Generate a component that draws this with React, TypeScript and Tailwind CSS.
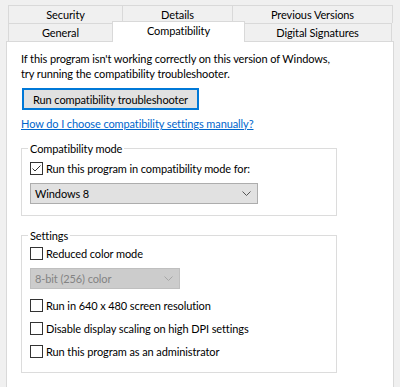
import React from 'react'

const font = { fontFamily: 'Lato, "Liberation Sans", Arial, sans-serif' }

function Tab({ label, width, selected }: { label: string; width: number; selected?: boolean }) {
  return (
    <div
      style={{ width }}
      className={
        selected
          ? 'relative z-10 -mx-[1px] -mt-[2px] flex h-[21px] items-start justify-center border border-b-0 border-[#d9d9d9] bg-white pt-[1px] text-black'
          : 'flex h-[18px] items-center justify-center border border-b-0 border-[#d9d9d9] bg-[#f0f0f0] text-black [&+&]:border-l-0'
      }
    >
      {label}
    </div>
  )
}

function Checkbox({ checked, label }: { checked?: boolean; label: string }) {
  return (
    <div className="flex h-[15px] items-center">
      <div className="flex h-[13px] w-[13px] items-center justify-center border border-[#333333] bg-white">
        {checked && (
          <svg width="11" height="11" viewBox="0 0 11 11">
            <path d="M1.5 5.5 L4 8 L9.5 2.5" fill="none" stroke="#333333" strokeWidth="1" />
          </svg>
        )}
      </div>
      <span className="ml-[3px] text-black">{label}</span>
    </div>
  )
}

function Select({ value, width, disabled }: { value: string; width: number; disabled?: boolean }) {
  return (
    <div
      style={{ width }}
      className={`flex h-[21px] items-center justify-between border pl-[4px] pr-[6px] ${
        disabled ? 'border-[#bfbfbf] bg-[#cccccc] text-[#838383]' : 'border-[#adadad] bg-[#e1e1e1] text-black'
      }`}
    >
      <span>{value}</span>
      <svg width="9" height="5" viewBox="0 0 9 5">
        <path d="M0.5 0.5 L4.5 4.5 L8.5 0.5" fill="none" stroke={disabled ? '#a6a6a6' : '#555555'} strokeWidth="1" />
      </svg>
    </div>
  )
}

function GroupBox({ title, children, className }: { title: string; children: React.ReactNode; className?: string }) {
  return (
    <div className={`relative w-[316px] border border-[#dcdcdc] pl-[8px] ${className ?? ''}`}>
      <span className="absolute -top-[8px] left-[6px] bg-white px-[2px] text-black">{title}</span>
      {children}
    </div>
  )
}

export default function App() {
  return (
    <div
      style={font}
      className="h-[387px] w-[400px] overflow-hidden bg-[#f0f0f0] pt-[5px] text-[11px] leading-[15px] tracking-[-0.1px]"
    >
      {/* Tabs */}
      <div className="ml-[8px] flex">
        <Tab label="Security" width={115} />
        <Tab label="Details" width={110} />
        <Tab label="Previous Versions" width={160} />
      </div>
      <div className="ml-[8px] flex h-[18px]">
        <Tab label="General" width={105} />
        <Tab label="Compatibility" width={133} selected />
        <div
          style={{ width: 148 }}
          className="flex h-[18px] items-center justify-center border border-b-0 border-l-0 border-[#d9d9d9] bg-[#f0f0f0] text-black"
        >
          Digital Signatures
        </div>
      </div>

      {/* Panel */}
      <div className="ml-[6px] h-[360px] w-[388px] border border-[#d9d9d9] bg-white pl-[14px] pt-[9px]">
        <p className="text-black">
          If this program isn't working correctly on this version of Windows,
          <br />
          try running the compatibility troubleshooter.
        </p>
        <button className="ml-[1px] mt-[7px] flex h-[22px] w-[177px] items-center justify-center border-2 border-[#0078d7] bg-[#e1e1e1] text-black">
          Run compatibility troubleshooter
        </button>
        <a className="mt-[6px] block w-fit text-[#0066cc] underline">
          How do I choose compatibility settings manually?
        </a>

        <GroupBox title="Compatibility mode" className="mt-[17px] pb-[11px] pt-[12px]">
          <Checkbox checked label="Run this program in compatibility mode for:" />
          <div className="mt-[7px]">
            <Select value="Windows 8" width={228} />
          </div>
        </GroupBox>

        <GroupBox title="Settings" className="mt-[19px] pb-[13px] pt-[10px]">
          <Checkbox label="Reduced color mode" />
          <div className="mt-[7px]">
            <Select value="8-bit (256) color" width={150} disabled />
          </div>
          <div className="mt-[9px]">
            <Checkbox label="Run in 640 x 480 screen resolution" />
          </div>
          <div className="mt-[8px]">
            <Checkbox label="Disable display scaling on high DPI settings" />
          </div>
          <div className="mt-[8px]">
            <Checkbox label="Run this program as an administrator" />
          </div>
        </GroupBox>
      </div>
    </div>
  )
}
